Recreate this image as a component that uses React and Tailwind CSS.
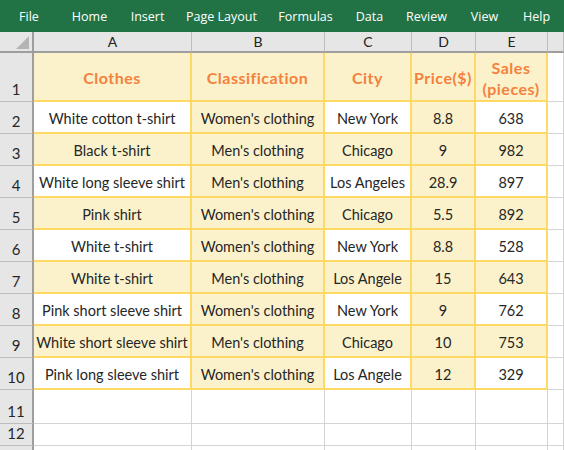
import React from 'react';

const menu = [
  ['File', 'ml-[20px] w-[18px]'],
  ['Home', 'ml-[35px] w-[33px]'],
  ['Insert', 'ml-[27px] w-[29px]'],
  ['Page Layout', 'ml-[27px] w-[65px]'],
  ['Formulas', 'ml-[27px] w-[49px]'],
  ['Data', 'ml-[28px] w-[23px]'],
  ['Review', 'ml-[27px] w-[37px]'],
  ['View', 'ml-[27px] w-[25px]'],
  ['Help', 'ml-[27px] w-[25px]'],
];

const rows = [
  ['White cotton t-shirt', "Women's clothing", 'New York', '8.8', '638'],
  ['Black t-shirt', "Men's clothing", 'Chicago', '9', '982'],
  ['White long sleeve shirt', "Men's clothing", 'Los Angeles', '28.9', '897'],
  ['Pink shirt', "Women's clothing", 'Chicago', '5.5', '892'],
  ['White t-shirt', "Women's clothing", 'New York', '8.8', '528'],
  ['White t-shirt', "Men's clothing", 'Los Angele', '15', '643'],
  ['Pink short sleeve shirt', "Women's clothing", 'New York', '9', '762'],
  ['White short sleeve shirt', "Men's clothing", 'Chicago', '10', '753'],
  ['Pink long sleeve shirt', "Women's clothing", 'Los Angele', '12', '329'],
];

function RowHead({ n, h }) {
  return (
    <div className={`${h} bg-[#e6e6e6] border-r-2 border-r-[#9e9e9e] border-b border-b-[#bdbdbd] flex items-end justify-center pb-[1px] text-[15px] text-[#262626]`}>
      {n}
    </div>
  );
}

function Blank({ h }) {
  return <div className={`${h} bg-white border-r border-b border-[#d4d4d4]`} />;
}

export default function App() {
  return (
    <div className="w-[564px] h-[450px] overflow-hidden bg-white" style={{ fontFamily: 'Lato, "Noto Sans", sans-serif' }}>
      {/* ribbon */}
      <div className="h-[32px] bg-[#217346] flex items-center pt-[2px] text-white text-[12.5px] whitespace-nowrap" style={{ fontFamily: '"Open Sans", "Noto Sans", sans-serif' }}>
        {menu.map(([m, cls]) => (
          <span key={m} className={`${cls} shrink-0 flex justify-center`}>{m}</span>
        ))}
      </div>

      <div className="grid grid-cols-[34px_158px_133px_87px_64px_72px_1fr]">
        {/* column headers */}
        <div className="h-[21px] bg-[#e6e6e6] border-r-2 border-r-[#9e9e9e] border-b-2 border-b-[#9e9e9e] flex items-end justify-end pr-[3px] pb-[2px]">
          <svg width="13" height="13" viewBox="0 0 13 13">
            <polygon points="13,0 13,13 0,13" fill="#b4b4b4" />
          </svg>
        </div>
        {['A', 'B', 'C', 'D', 'E', ''].map((c, i) => (
          <div key={i} className="h-[21px] bg-[#e6e6e6] border-r border-r-[#bdbdbd] border-b-2 border-b-[#9e9e9e] flex items-center justify-center text-[14px] text-[#222]">
            {c}
          </div>
        ))}

        {/* header row */}
        <RowHead n="1" h="h-[49px]" />
        {['Clothes', 'Classification', 'City', 'Price($)'].map((t) => (
          <div key={t} className="h-[49px] bg-[#fbf2cc] border-r-2 border-b-2 border-[#ffd966] flex items-center justify-center pt-[2px] font-bold text-[16px] tracking-[0.5px] text-[#f4813c] whitespace-nowrap">
            {t}
          </div>
        ))}
        <div className="h-[49px] bg-[#fbf2cc] border-r-2 border-b-2 border-[#ffd966] flex flex-col items-center justify-center pt-[2px] font-bold text-[16px] tracking-[0.5px] leading-[21px] text-[#f4813c]">
          <span>Sales</span>
          <span>(pieces)</span>
        </div>
        <Blank h="h-[49px]" />

        {/* data rows */}
        {rows.map((r, ri) => (
          <React.Fragment key={ri}>
            <RowHead n={ri + 2} h="h-[32px]" />
            {r.map((v, ci) => {
              const white = ri % 2 === 0 && ci % 2 === 0;
              return (
                <div key={ci} className={`h-[32px] ${white ? 'bg-white' : 'bg-[#fbf2cc]'} border-r-2 border-b-2 border-[#ffd966] flex items-center justify-center pt-[4px] text-[14.5px] text-[#262626] whitespace-nowrap overflow-hidden`}>
                  {v}
                </div>
              );
            })}
            <Blank h="h-[32px]" />
          </React.Fragment>
        ))}

        {/* empty rows */}
        {[['11', 'h-[34px]'], ['12', 'h-[22px]'], ['', 'h-[22px]']].map(([n, h]) => (
          <React.Fragment key={h + n}>
            <RowHead n={n} h={h} />
            {[0, 1, 2, 3, 4, 5].map((i) => (
              <Blank key={i} h={h} />
            ))}
          </React.Fragment>
        ))}
      </div>
    </div>
  );
}
